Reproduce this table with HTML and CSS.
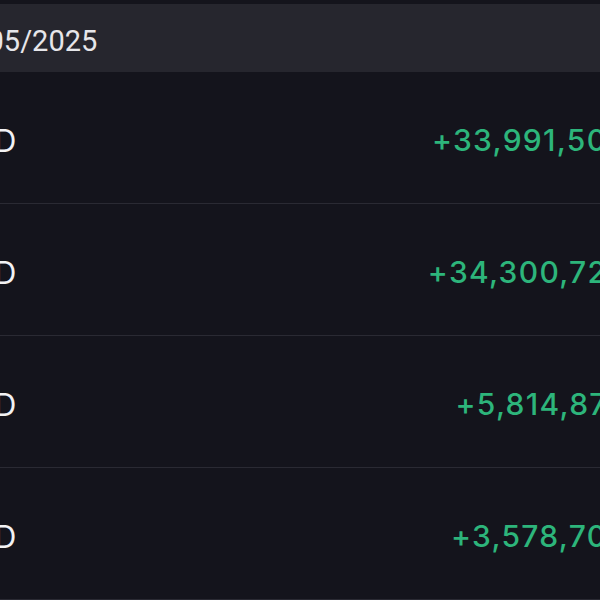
FILE: index.html
```html
<!DOCTYPE html>
<html lang="en">
<head>
<meta charset="utf-8">
<link rel="stylesheet" href="styles.css">
</head>
<body>
<div class="screen">
  <div class="topbar"></div>
  <div class="date-header">10/05/2025</div>
  <div class="list">
    <div class="row"><span class="cur">USD</span><span class="amt">+33,991,500</span></div>
    <div class="row"><span class="cur">USD</span><span class="amt">+34,300,720</span></div>
    <div class="row"><span class="cur">USD</span><span class="amt">+5,814,870</span></div>
    <div class="row"><span class="cur">USD</span><span class="amt">+3,578,700</span></div>
  </div>
</div>
</body>
</html>
```
FILE: styles.css
```css
html, body {
  margin: 0;
  padding: 0;
  background: #14141c;
  overflow: hidden;
}
.screen {
  width: 685px;
  margin-left: -57px;
  font-family: Inter, "Noto Sans", sans-serif;
}
.topbar {
  height: 4px;
  background: #14141c;
}
.date-header {
  height: 68px;
  box-sizing: border-box;
  padding-top: 6px;
  background: #26262e;
  color: #e6e6ea;
  font-family: Roboto, "Noto Sans", sans-serif;
  font-size: 29px;
  display: flex;
  align-items: center;
}
.row {
  box-sizing: border-box;
  height: 132px;
  padding: 5px 0 0 8px;
  border-bottom: 1px solid #2a2a33;
  display: flex;
  align-items: center;
  justify-content: space-between;
}
.cur {
  color: #f2f2f4;
  font-size: 31px;
}
.amt {
  color: #2db57b;
  font-size: 30px;
  font-weight: 500;
  letter-spacing: 1.3px;
}
```
